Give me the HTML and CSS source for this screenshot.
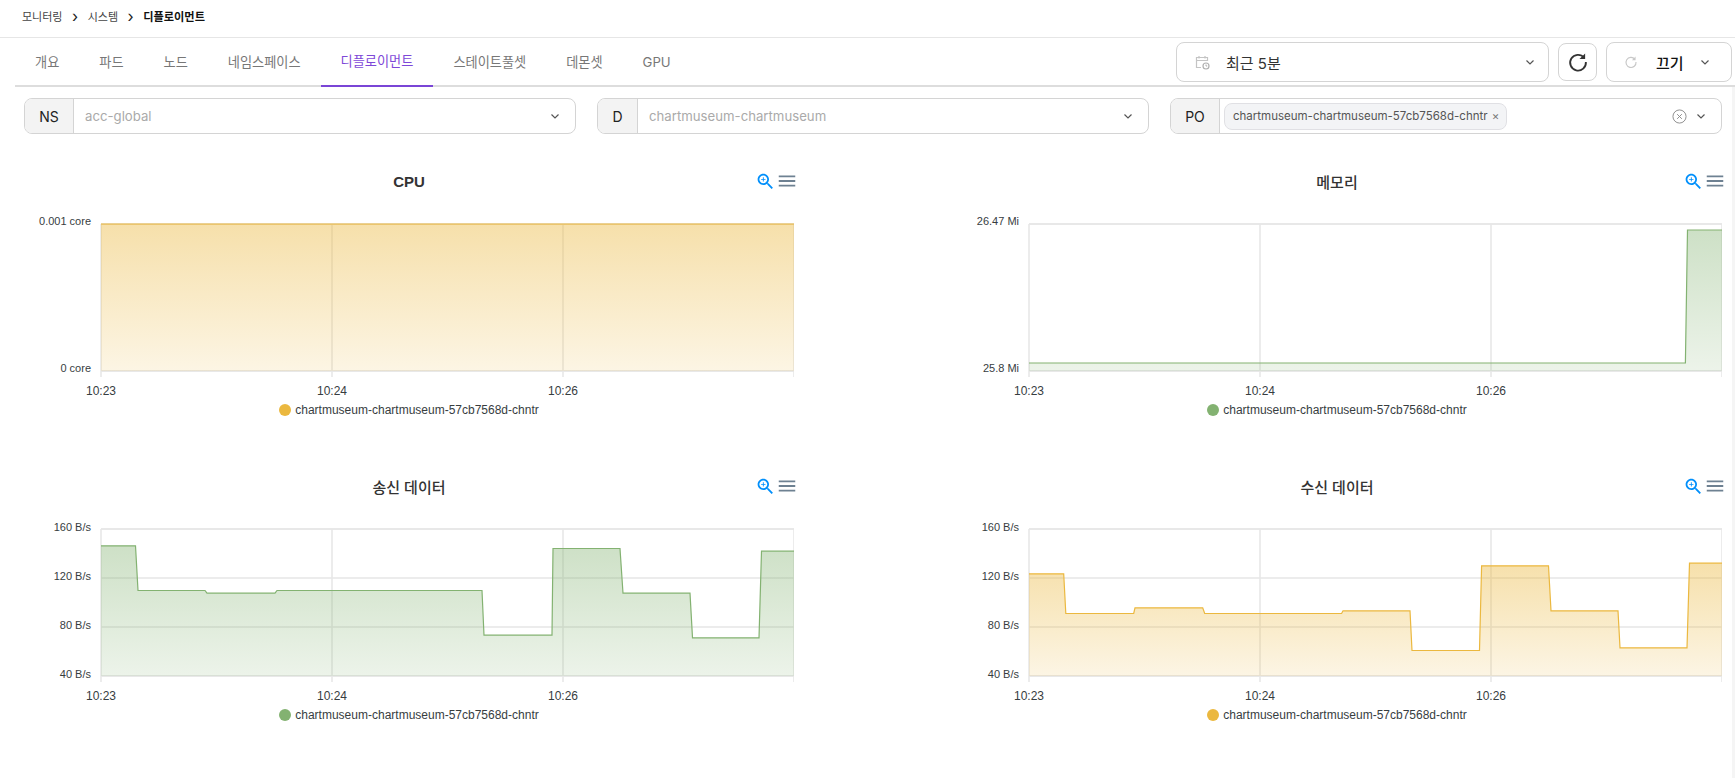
FILE: index.html
```html
<!DOCTYPE html>
<html lang="ko">
<head>
    <meta charset="UTF-8">
    <meta name="viewport" content="width=device-width, initial-scale=1.0">
    <title>디플로이먼트</title>
    <link rel="stylesheet" href="styles.css">
</head>
<body>

    <!-- Shared gradients and icons -->
    <svg class="svg-defs" aria-hidden="true">
        <defs>
            <linearGradient id="grad-amber" x1="0" y1="0" x2="0" y2="1">
                <stop offset="0" stop-color="#ebb83f" stop-opacity="0.44"/>
                <stop offset="1" stop-color="#ebb83f" stop-opacity="0.14"/>
            </linearGradient>
            <linearGradient id="grad-green" x1="0" y1="0" x2="0" y2="1">
                <stop offset="0" stop-color="#83b271" stop-opacity="0.4"/>
                <stop offset="1" stop-color="#83b271" stop-opacity="0.15"/>
            </linearGradient>
            <symbol id="icon-zoom" viewBox="0 0 24 24">
                <path d="M15.5 14h-.79l-.28-.27C15.41 12.59 16 11.11 16 9.5 16 5.91 13.09 3 9.5 3S3 5.91 3 9.5 5.91 16 9.5 16c1.61 0 3.09-.59 4.23-1.57l.27.28v.79l5 4.99L20.49 19l-4.99-5zm-6 0C7.01 14 5 11.99 5 9.5S7.01 5 9.5 5 14 7.01 14 9.5 11.99 14 9.5 14z"/>
                <path d="M12 10h-2v2H9v-2H7V9h2V7h1v2h2v1z"/>
            </symbol>
            <symbol id="icon-menu" viewBox="0 0 24 24">
                <path d="M3 18h18v-2H3v2zm0-5h18v-2H3v2zm0-7v2h18V6H3z"/>
            </symbol>
            <symbol id="icon-chevron" viewBox="0 0 12 12">
                <path d="M2.5 4.5 6 8l3.5-3.5" fill="none" stroke="currentColor" stroke-width="1.2"/>
            </symbol>
            <symbol id="icon-refresh" viewBox="0 0 24 24">
                <path d="M18.6 7.2A8.6 8.6 0 1 0 20.6 12" fill="none" stroke="currentColor" stroke-width="2"/>
                <path d="M19.8 2.6v6.2h-6.2z" fill="currentColor"/>
            </symbol>
        </defs>
    </svg>

    <!-- Breadcrumb -->
    <nav class="breadcrumb">
        <span>모니터링</span>
        <span class="crumb-sep">›</span>
        <span>시스템</span>
        <span class="crumb-sep">›</span>
        <strong>디플로이먼트</strong>
    </nav>

    <!-- Tabs and time controls -->
    <div class="tab-bar">
        <div class="tabs">
            <a class="tab">개요</a>
            <a class="tab">파드</a>
            <a class="tab">노드</a>
            <a class="tab">네임스페이스</a>
            <a class="tab active">디플로이먼트</a>
            <a class="tab">스테이트풀셋</a>
            <a class="tab">데몬셋</a>
            <a class="tab">GPU</a>
        </div>
        <div class="time-controls">
            <div class="time-select">
                <svg class="calendar-icon" viewBox="0 0 16 16" width="16" height="16">
                    <path d="M7 13.5H2.5v-10h11V7M2.5 6.5h11M5 2v2.500M11 2v2.500" fill="none" stroke="#c4c4c4" stroke-width="1.2"/>
                    <circle cx="12" cy="12" r="3" fill="none" stroke="#b0b0b0" stroke-width="1.2"/>
                    <path d="M12 10.500V12h1.200" fill="none" stroke="#b0b0b0"/>
                </svg>
                <span class="time-label">최근 5분</span>
                <svg class="chevron"><use href="#icon-chevron"/></svg>
            </div>
            <button class="refresh-btn">
                <svg width="22" height="22"><use href="#icon-refresh"/></svg>
            </button>
            <div class="auto-select">
                <svg class="auto-icon" width="14" height="14"><use href="#icon-refresh"/></svg>
                <span class="auto-label">끄기</span>
                <svg class="chevron"><use href="#icon-chevron"/></svg>
            </div>
        </div>
    </div>

    <div class="content">

        <!-- Filters -->
        <div class="filters">
            <div class="filter">
                <span class="addon addon-ns">NS</span>
                <span class="filter-value">acc-global</span>
                <svg class="chevron"><use href="#icon-chevron"/></svg>
            </div>
            <div class="filter">
                <span class="addon addon-d">D</span>
                <span class="filter-value">chartmuseum-chartmuseum</span>
                <svg class="chevron"><use href="#icon-chevron"/></svg>
            </div>
            <div class="filter">
                <span class="addon addon-po">PO</span>
                <div class="filter-value">
                    <span class="chip">chartmuseum-chartmuseum-57cb7568d-chntr <span class="chip-x">×</span></span>
                </div>
                <svg class="clear-icon" viewBox="0 0 16 16" width="15" height="15">
                    <circle cx="8" cy="8" r="7" fill="none" stroke="#8a8a8a"/>
                    <path d="M5.500 5.500l5 5M10.500 5.500l-5 5" stroke="#8a8a8a"/>
                </svg>
                <svg class="chevron"><use href="#icon-chevron"/></svg>
            </div>
        </div>

        <!-- Charts -->
        <div class="charts">

            <section class="chart">
                <div class="chart-head">
                    <h3 class="chart-title chart-title-bold">CPU</h3>
                    <div class="chart-tools">
                        <svg class="tool-zoom"><use href="#icon-zoom"/></svg>
                        <svg class="tool-menu"><use href="#icon-menu"/></svg>
                    </div>
                </div>
                <svg class="plot" viewBox="0 0 770 190">
                    <path class="grid" d="M77 14H770M77 161H770"/>
                    <path class="grid-thin" d="M77 14V167M308 14V167M539 14V167M770 14V167"/>
                    <path fill="url(#grad-amber)" d="M77 14H770V161H77Z"/>
                    <path class="line-amber" d="M77 14H770"/>
                    <text class="y-label" x="67" y="15">0.001 core</text>
                    <text class="y-label" x="67" y="162">0 core</text>
                    <text class="x-label" x="77" y="185">10:23</text>
                    <text class="x-label" x="308" y="185">10:24</text>
                    <text class="x-label" x="539" y="185">10:26</text>
                </svg>
                <div class="legend"><i class="dot dot-amber"></i>chartmuseum-chartmuseum-57cb7568d-chntr</div>
            </section>

            <section class="chart">
                <div class="chart-head">
                    <h3 class="chart-title">메모리</h3>
                    <div class="chart-tools">
                        <svg class="tool-zoom"><use href="#icon-zoom"/></svg>
                        <svg class="tool-menu"><use href="#icon-menu"/></svg>
                    </div>
                </div>
                <svg class="plot" viewBox="0 0 770 190">
                    <path class="grid" d="M77 14H770M77 161H770"/>
                    <path class="grid-thin" d="M77 14V167M308 14V167M539 14V167M770 14V167"/>
                    <path fill="url(#grad-green)" d="M77 153H733.400L735.500 20H770V161H77Z"/>
                    <path class="line-green" d="M77 153H733.400L735.500 20H770"/>
                    <text class="y-label" x="67" y="15">26.47 Mi</text>
                    <text class="y-label" x="67" y="162">25.8 Mi</text>
                    <text class="x-label" x="77" y="185">10:23</text>
                    <text class="x-label" x="308" y="185">10:24</text>
                    <text class="x-label" x="539" y="185">10:26</text>
                </svg>
                <div class="legend"><i class="dot dot-green"></i>chartmuseum-chartmuseum-57cb7568d-chntr</div>
            </section>

            <section class="chart">
                <div class="chart-head">
                    <h3 class="chart-title">송신 데이터</h3>
                    <div class="chart-tools">
                        <svg class="tool-zoom"><use href="#icon-zoom"/></svg>
                        <svg class="tool-menu"><use href="#icon-menu"/></svg>
                    </div>
                </div>
                <svg class="plot" viewBox="0 0 770 190">
                    <path class="grid" d="M77 14H770M77 161H770"/>
                    <path class="grid-thin" d="M77 63H770M77 112H770"/>
                    <path class="grid-thin" d="M77 14V167M308 14V167M539 14V167M770 14V167"/>
                    <path fill="url(#grad-green)" d="M77 30.800H111.500L114 75.500H181L183 78.200H251L253 75.500H458L460 120.200H528L529 33.500H596L599 78.200H666L668.500 122.800H735L737.500 36.200H770V161H77Z"/>
                    <path class="line-green" d="M77 30.800H111.500L114 75.500H181L183 78.200H251L253 75.500H458L460 120.200H528L529 33.500H596L599 78.200H666L668.500 122.800H735L737.500 36.200H770"/>
                    <text class="y-label" x="67" y="15.500">160 B/s</text>
                    <text class="y-label" x="67" y="64.500">120 B/s</text>
                    <text class="y-label" x="67" y="113.500">80 B/s</text>
                    <text class="y-label" x="67" y="162.500">40 B/s</text>
                    <text class="x-label" x="77" y="185">10:23</text>
                    <text class="x-label" x="308" y="185">10:24</text>
                    <text class="x-label" x="539" y="185">10:26</text>
                </svg>
                <div class="legend"><i class="dot dot-green"></i>chartmuseum-chartmuseum-57cb7568d-chntr</div>
            </section>

            <section class="chart">
                <div class="chart-head">
                    <h3 class="chart-title">수신 데이터</h3>
                    <div class="chart-tools">
                        <svg class="tool-zoom"><use href="#icon-zoom"/></svg>
                        <svg class="tool-menu"><use href="#icon-menu"/></svg>
                    </div>
                </div>
                <svg class="plot" viewBox="0 0 770 190">
                    <path class="grid" d="M77 14H770M77 161H770"/>
                    <path class="grid-thin" d="M77 63H770M77 112H770"/>
                    <path class="grid-thin" d="M77 14V167M308 14V167M539 14V167M770 14V167"/>
                    <path fill="url(#grad-amber)" d="M77 58.800H111.700L113.800 98.500H181.700L183 92.800H250.700L252.700 98.500H389.600L391 95.800H458L460 135.500H527.500L529.600 50.800H596.500L599 95.800H666L668 132.800H735L737.500 48.200H770V161H77Z"/>
                    <path class="line-amber" d="M77 58.800H111.700L113.800 98.500H181.700L183 92.800H250.700L252.700 98.500H389.600L391 95.800H458L460 135.500H527.500L529.600 50.800H596.500L599 95.800H666L668 132.800H735L737.500 48.200H770"/>
                    <text class="y-label" x="67" y="15.500">160 B/s</text>
                    <text class="y-label" x="67" y="64.500">120 B/s</text>
                    <text class="y-label" x="67" y="113.500">80 B/s</text>
                    <text class="y-label" x="67" y="162.500">40 B/s</text>
                    <text class="x-label" x="77" y="185">10:23</text>
                    <text class="x-label" x="308" y="185">10:24</text>
                    <text class="x-label" x="539" y="185">10:26</text>
                </svg>
                <div class="legend"><i class="dot dot-amber"></i>chartmuseum-chartmuseum-57cb7568d-chntr</div>
            </section>

        </div>
    </div>

</body>
</html>
```

FILE: styles.css
```css
* {
    box-sizing: border-box;
}
body {
    margin: 0;
    background: white;
    color: #333;
    font-family: Inter, "Noto Sans CJK KR", sans-serif;
    overflow: hidden;
}
.svg-defs {
    display: block;
    width: 0;
    height: 0;
}

/* Breadcrumb */
.breadcrumb {
    display: flex;
    align-items: center;
    gap: 7px;
    height: 38px;
    padding: 0 22px 6px;
    border-bottom: 1px solid #e6e6e6;
    font-size: 11px;
    color: #444;
}
.breadcrumb strong {
    color: #111;
    font-size: 11.200px;
}
.crumb-sep {
    font-size: 16px;
    color: #222;
    margin: 0 2.500px;
}

/* Tabs */
.tab-bar {
    display: flex;
    justify-content: space-between;
    height: 49px;
    margin-left: 15px;
    padding-right: 3px;
    border-bottom: 2px solid #ddd;
}
.tabs {
    display: flex;
}
.tab {
    display: flex;
    align-items: center;
    height: 49px;
    padding: 0 20px 2px;
    font-size: 13.200px;
    color: #777;
}
.tab.active {
    color: #7e48d8;
    border-bottom: 2px solid #7a45d6;
}
.time-controls {
    display: flex;
    align-items: center;
    gap: 9px;
    height: 40px;
    margin-top: 4px;
}
.time-select, .auto-select, .refresh-btn {
    display: flex;
    align-items: center;
    background: white;
    border: 1px solid #d4d4d4;
    border-radius: 8px;
}
.time-select {
    width: 373px;
    height: 40px;
    padding: 0 12px 0 17px;
}
.calendar-icon {
    margin-right: 16px;
}
.time-label {
    flex: 1;
    font-size: 15px;
    color: #333;
}
.refresh-btn {
    justify-content: center;
    width: 39px;
    height: 38px;
    padding: 0;
    color: #333;
}
.auto-select {
    width: 126px;
    height: 40px;
    padding: 0 20px 0 17px;
}
.auto-icon {
    color: #c8c8c8;
    margin-right: 18px;
}
.auto-label {
    flex: 1;
    font-size: 15px;
    font-weight: 500;
    color: #111;
}
.chevron {
    width: 12px;
    height: 12px;
    color: #555;
    flex: none;
}

/* Page body, with the pale scrollbar track down its right edge */
.content {
    height: 691px;
    border-right: 3px solid #f5f5f5;
}

/* Filters */
.filters {
    display: flex;
    gap: 21px;
    padding: 11px 10px 0 24px;
}
.filter {
    flex: 1;
    display: flex;
    align-items: center;
    height: 36px;
    padding-right: 14px;
    border: 1px solid #d4d4d4;
    border-radius: 8px;
    overflow: hidden;
}
.addon {
    display: flex;
    align-items: center;
    justify-content: center;
    align-self: stretch;
    background: #f3f3f3;
    border-right: 1px solid #d4d4d4;
    font-size: 14px;
    color: #222;
}
.addon-ns {
    width: 49px;
}
.addon-d {
    width: 40px;
}
.addon-po {
    width: 49px;
}
.filter-value {
    flex: 1;
    padding-left: 11px;
    font-size: 13.200px;
    color: #aaa;
}
.filter-value .chip {
    margin-left: -7px;
}
.chip {
    display: inline-block;
    height: 27px;
    line-height: 25px;
    padding: 0 7px 0 8px;
    background: #f3f4f6;
    border: 1px solid #e0e0e4;
    border-radius: 8px;
    font-size: 11.500px;
    color: #555;
}
.chip-x {
    margin-left: 1px;
    color: #777;
}
.clear-icon {
    margin-right: 8px;
}

/* Charts */
.charts {
    display: grid;
    grid-template-columns: 770px 770px;
    justify-content: space-between;
    row-gap: 52px;
    padding: 33px 10px 0 24px;
}
.chart-head {
    position: relative;
    display: flex;
    align-items: center;
    justify-content: center;
    height: 30px;
    margin-bottom: 13px;
    padding-bottom: 2px;
}
.chart-title {
    margin: 0;
    font-size: 15px;
    font-weight: 500;
    color: #333;
}
.chart-title-bold {
    font-family: "Liberation Sans", sans-serif;
    font-weight: bold;
    font-size: 15px;
}
.chart-tools {
    position: absolute;
    top: 3px;
    right: -4px;
    display: flex;
    align-items: center;
}
.tool-zoom {
    width: 21px;
    height: 21px;
    fill: #008ffb;
}
.tool-menu {
    width: 22px;
    height: 22px;
    fill: #6e8192;
}
.plot {
    display: block;
    width: 770px;
    height: 190px;
}
.grid {
    fill: none;
    stroke: #e8e8e8;
    stroke-width: 2;
}
.grid-thin {
    fill: none;
    stroke: #e6e6e6;
    stroke-width: 1.5;
}
.line-amber {
    fill: none;
    stroke: #ebb83f;
    stroke-width: 1.200;
}
.line-green {
    fill: none;
    stroke: #83b271;
    stroke-width: 1.200;
}
.y-label {
    font-family: "Liberation Sans", sans-serif;
    font-size: 11px;
    fill: #373d3f;
    text-anchor: end;
}
.x-label {
    font-family: "Liberation Sans", sans-serif;
    font-size: 12px;
    fill: #373d3f;
    text-anchor: middle;
}
.legend {
    display: flex;
    align-items: center;
    justify-content: center;
    height: 20px;
    font-family: "Liberation Sans", sans-serif;
    font-size: 12px;
    color: #373d3f;
}
.dot {
    width: 12px;
    height: 12px;
    border-radius: 50%;
    margin-right: 4px;
}
.dot-amber {
    background: #ebb83f;
}
.dot-green {
    background: #83b271;
}
```
